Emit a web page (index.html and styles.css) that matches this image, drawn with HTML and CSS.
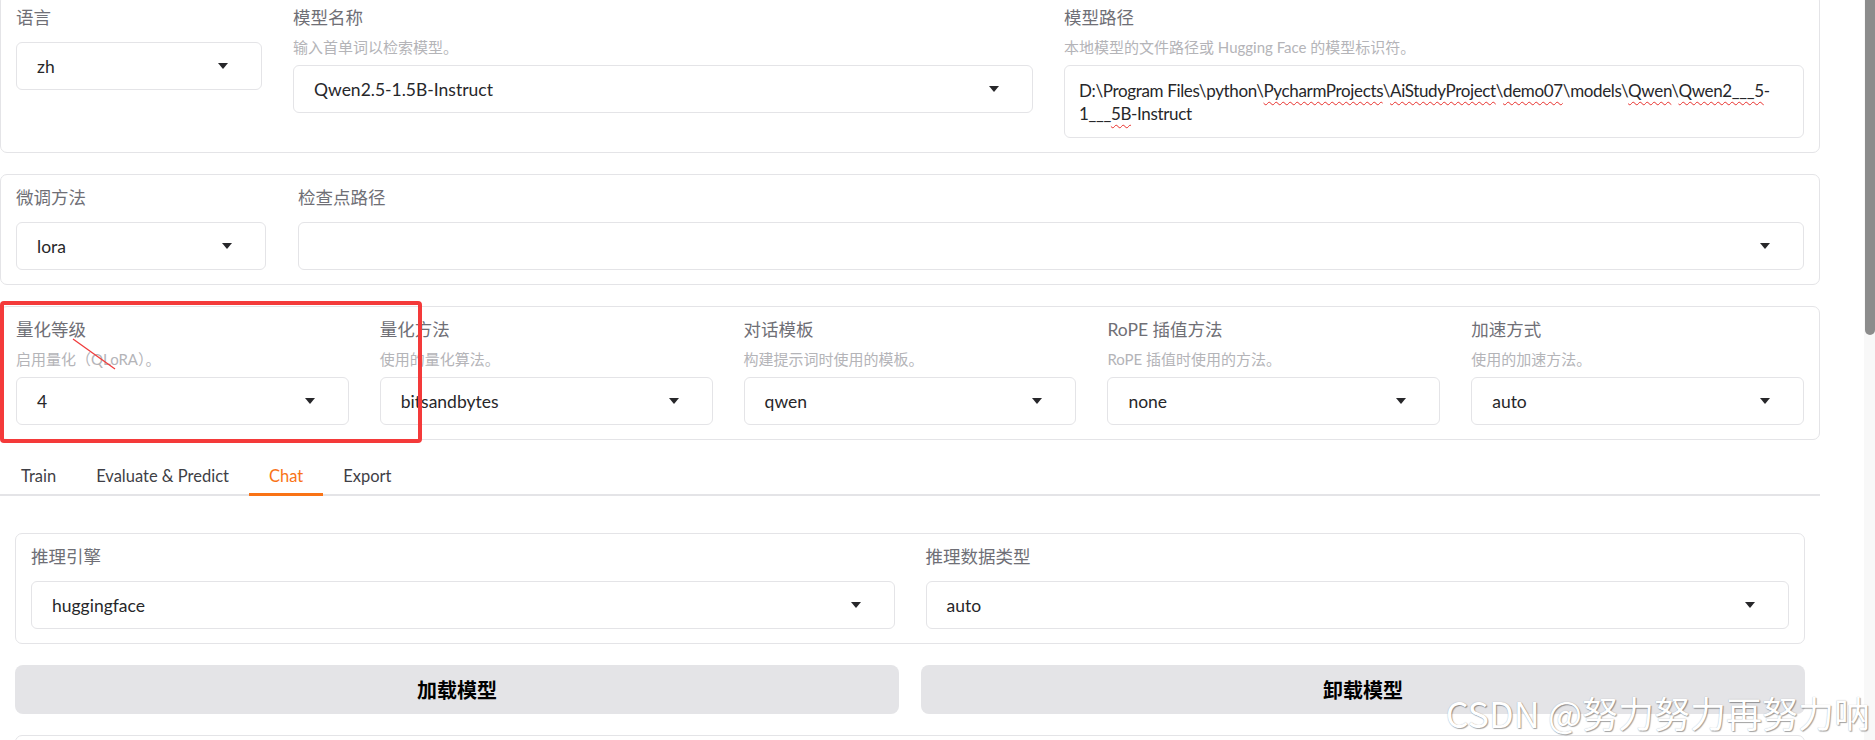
FILE: index.html
```html
<!DOCTYPE html>
<html lang="zh">
<head>
  <meta charset="UTF-8">
  <title>LLaMA Board</title>
  <link rel="stylesheet" href="styles.css">
</head>
<body>
  <div class="page">
    <main class="app">

      <!-- Model row -->
      <section class="panel row-model">
        <div class="field">
          <span class="label">语言</span>
          <div class="select"><span>zh</span><svg class="caret" width="10" height="6" viewBox="0 0 10 6"><polygon points="0,0 10,0 5,6"/></svg></div>
        </div>
        <div class="field has-info">
          <span class="label">模型名称</span>
          <p class="info">输入首单词以检索模型。</p>
          <div class="select"><span>Qwen2.5-1.5B-Instruct</span><svg class="caret" width="10" height="6" viewBox="0 0 10 6"><polygon points="0,0 10,0 5,6"/></svg></div>
        </div>
        <div class="field has-info">
          <span class="label">模型路径</span>
          <p class="info">本地模型的文件路径或 Hugging Face 的模型标识符。</p>
          <div class="textarea">
            <div class="line">D:\Program Files\python\<span class="typo">PycharmProjects</span>\<span class="typo">AiStudyProject</span>\<span class="typo">demo07</span>\models\<span class="typo">Qwen</span>\<span class="typo">Qwen2___5</span>-</div>
            <div class="line">1___<span class="typo">5B</span>-Instruct</div>
          </div>
        </div>
      </section>

      <!-- Finetuning row -->
      <section class="panel row-adapter">
        <div class="field">
          <span class="label">微调方法</span>
          <div class="select"><span>lora</span><svg class="caret" width="10" height="6" viewBox="0 0 10 6"><polygon points="0,0 10,0 5,6"/></svg></div>
        </div>
        <div class="field">
          <span class="label">检查点路径</span>
          <div class="select"><span></span><svg class="caret" width="10" height="6" viewBox="0 0 10 6"><polygon points="0,0 10,0 5,6"/></svg></div>
        </div>
      </section>

      <!-- Advanced row -->
      <section class="panel row-advanced">
        <div class="field has-info">
          <span class="label">量化等级</span>
          <p class="info">启用量化（QLoRA）。</p>
          <div class="select"><span>4</span><svg class="caret" width="10" height="6" viewBox="0 0 10 6"><polygon points="0,0 10,0 5,6"/></svg></div>
        </div>
        <div class="field has-info">
          <span class="label">量化方法</span>
          <p class="info">使用的量化算法。</p>
          <div class="select"><span>bitsandbytes</span><svg class="caret" width="10" height="6" viewBox="0 0 10 6"><polygon points="0,0 10,0 5,6"/></svg></div>
        </div>
        <div class="field has-info">
          <span class="label">对话模板</span>
          <p class="info">构建提示词时使用的模板。</p>
          <div class="select"><span>qwen</span><svg class="caret" width="10" height="6" viewBox="0 0 10 6"><polygon points="0,0 10,0 5,6"/></svg></div>
        </div>
        <div class="field has-info">
          <span class="label">RoPE 插值方法</span>
          <p class="info">RoPE 插值时使用的方法。</p>
          <div class="select"><span>none</span><svg class="caret" width="10" height="6" viewBox="0 0 10 6"><polygon points="0,0 10,0 5,6"/></svg></div>
        </div>
        <div class="field has-info">
          <span class="label">加速方式</span>
          <p class="info">使用的加速方法。</p>
          <div class="select"><span>auto</span><svg class="caret" width="10" height="6" viewBox="0 0 10 6"><polygon points="0,0 10,0 5,6"/></svg></div>
        </div>

        <!-- annotation drawn over the screenshot -->
        <div class="mark"></div>
        <svg class="mark-line" width="60" height="50" viewBox="0 0 60 50"><line x1="6" y1="4" x2="48" y2="34"/></svg>
      </section>

      <!-- Tabs -->
      <div class="tabs">
        <nav class="tab-nav">
          <button class="tab">Train</button>
          <button class="tab">Evaluate &amp; Predict</button>
          <button class="tab active">Chat</button>
          <button class="tab">Export</button>
        </nav>

        <div class="tab-body">
          <section class="panel row-infer">
            <div class="field">
              <span class="label">推理引擎</span>
              <div class="select"><span>huggingface</span><svg class="caret" width="10" height="6" viewBox="0 0 10 6"><polygon points="0,0 10,0 5,6"/></svg></div>
            </div>
            <div class="field">
              <span class="label">推理数据类型</span>
              <div class="select"><span>auto</span><svg class="caret" width="10" height="6" viewBox="0 0 10 6"><polygon points="0,0 10,0 5,6"/></svg></div>
            </div>
          </section>

          <div class="actions">
            <button class="btn">加载模型</button>
            <button class="btn">卸载模型</button>
          </div>

          <section class="panel panel-next"></section>
        </div>
      </div>
    </main>

    <div class="scrollbar"><div class="thumb"></div></div>
  </div>

  <div class="watermark">CSDN @努力努力再努力呐</div>
</body>
</html>
```

FILE: styles.css
```css
/* Reset & Base */
* {
  box-sizing: border-box;
  margin: 0;
  padding: 0;
}

html,
body {
  height: 740px;
  overflow: hidden;
}

body {
  font-family: Lato, "Noto Sans CJK SC", sans-serif;
  background: #fff;
  color: #27272a;
  position: relative;
}

/* Layout */
.page {
  display: flex;
  align-items: flex-start;
}

.app {
  width: 1820px;
  margin-top: -6px; /* page is scrolled a little */
  display: flex;
  flex-direction: column;
  gap: 21px;
}

/* Panels */
.panel {
  position: relative;
  display: grid;
  gap: 31px;
  padding: 12px 15px 14px;
  border: 1px solid #e4e4e7;
  border-radius: 7px;
  background: #fff;
}

.row-model {
  grid-template-columns: 246px minmax(0, 1fr) minmax(0, 1fr);
}

.row-adapter {
  grid-template-columns: 250px minmax(0, 1fr);
  gap: 32px;
}

.row-advanced {
  grid-template-columns: repeat(5, minmax(0, 1fr));
}

.row-infer {
  grid-template-columns: minmax(0, 1fr) minmax(0, 1fr);
}

/* Fields */
.label {
  display: block;
  font-size: 17.5px;
  line-height: 22px;
  color: #6f6f76;
  margin-bottom: 13px;
}

.has-info .label {
  margin-bottom: 8px;
}

.info {
  font-size: 15px;
  line-height: 20px;
  color: #b4b4b8;
  margin-bottom: 8px;
  white-space: nowrap;
}

.select {
  height: 48px;
  display: flex;
  align-items: center;
  justify-content: space-between;
  padding: 0 33px 0 20px;
  border: 1px solid #e4e4e7;
  border-radius: 6px;
  font-size: 17.5px;
  color: #27272a;
}

.caret {
  fill: #27272a;
  flex-shrink: 0;
}

.textarea {
  height: 73px;
  padding: 13px 14px;
  border: 1px solid #e4e4e7;
  border-radius: 6px;
  font-size: 17px;
  letter-spacing: -0.35px;
  line-height: 23px;
  color: #27272a;
  overflow: hidden;
}

.textarea .line {
  white-space: nowrap;
}

.typo {
  text-decoration: underline wavy #e8302c;
  text-decoration-thickness: 1px;
  text-underline-offset: 4px;
}

/* Red annotation */
.mark {
  position: absolute;
  left: -1px;
  top: -6px;
  width: 422px;
  height: 142px;
  border: 4px solid #f43a3a;
  border-radius: 4px;
  pointer-events: none;
}

.mark-line {
  position: absolute;
  left: 66px;
  top: 28px;
}

.mark-line line {
  stroke: #f03c3c;
  stroke-width: 1.3;
}

/* Tabs */
.tab-nav {
  display: flex;
  padding-left: 1px;
  box-shadow: inset 0 -2px 0 #e4e4e7;
}

.tab {
  padding: 4px 20px 6px;
  border: none;
  border-bottom: 3px solid transparent;
  background: none;
  font-family: inherit;
  font-size: 16.5px;
  line-height: 22px;
  color: #3f3f46;
}

.tab.active {
  color: #f97316;
  border-bottom-color: #f97316;
}

.tab-body {
  padding: 37px 15px 0;
  display: flex;
  flex-direction: column;
  gap: 21px;
}

/* Buttons */
.actions {
  display: grid;
  grid-template-columns: 1fr 1fr;
  gap: 22px;
}

.btn {
  height: 49px;
  border: none;
  border-radius: 8px;
  background: #e4e4e7;
  font-family: "Noto Sans CJK SC", sans-serif;
  font-size: 20px;
  font-weight: 700;
  color: #000;
}

.panel-next {
  height: 60px;
}

/* Scrollbar column */
.scrollbar {
  margin-left: auto;
  width: 11px;
  height: 740px;
  background: #f8f8f8;
}

.thumb {
  margin-left: 1px;
  width: 10px;
  height: 335px;
  background: #8c8c8c;
  border-radius: 0 0 5px 5px;
}

/* Watermark */
.watermark {
  position: absolute;
  right: 5px;
  top: 692px;
  font-family: "Noto Sans CJK SC", sans-serif;
  font-size: 36px;
  line-height: 40px;
  color: #fff;
  white-space: nowrap;
  text-shadow: 1px 1px 1px rgba(0, 0, 0, 0.35), 0 0 1px rgba(0, 0, 0, 0.3);
}
```
